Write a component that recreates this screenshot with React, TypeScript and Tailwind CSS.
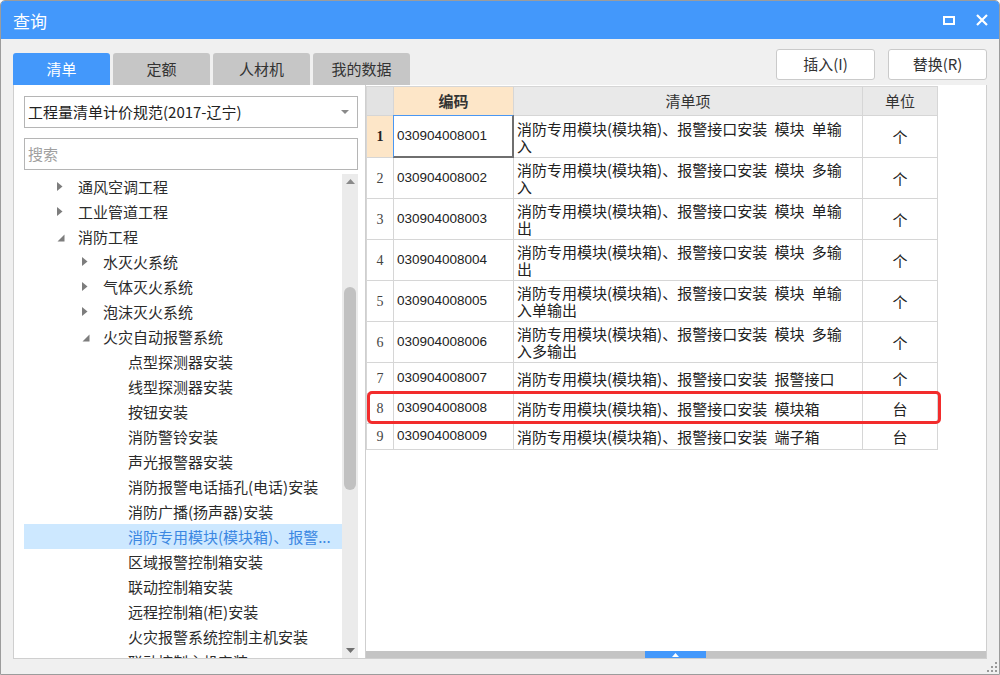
import React from "react";

type TreeNode = { label: string; level: 1 | 2 | 3; arrow?: "right" | "down"; selected?: boolean };

const tree: TreeNode[] = [
  { label: "通风空调工程", level: 1, arrow: "right" },
  { label: "工业管道工程", level: 1, arrow: "right" },
  { label: "消防工程", level: 1, arrow: "down" },
  { label: "水灭火系统", level: 2, arrow: "right" },
  { label: "气体灭火系统", level: 2, arrow: "right" },
  { label: "泡沫灭火系统", level: 2, arrow: "right" },
  { label: "火灾自动报警系统", level: 2, arrow: "down" },
  { label: "点型探测器安装", level: 3 },
  { label: "线型探测器安装", level: 3 },
  { label: "按钮安装", level: 3 },
  { label: "消防警铃安装", level: 3 },
  { label: "声光报警器安装", level: 3 },
  { label: "消防报警电话插孔(电话)安装", level: 3 },
  { label: "消防广播(扬声器)安装", level: 3 },
  { label: "消防专用模块(模块箱)、报警...", level: 3, selected: true },
  { label: "区域报警控制箱安装", level: 3 },
  { label: "联动控制箱安装", level: 3 },
  { label: "远程控制箱(柜)安装", level: 3 },
  { label: "火灾报警系统控制主机安装", level: 3 },
  { label: "联动控制主机安装", level: 3 },
];

const levelPad: Record<number, string> = { 1: "pl-[33px]", 2: "pl-[58px]", 3: "pl-[83px]" };

const P = "消防专用模块(模块箱)、报警接口安装";

type Row = { n: number; code: string; lines: string[]; unit: string; h: string };
const rows: Row[] = [
  { n: 1, code: "030904008001", lines: [P + " 模块 单输", "入"], unit: "个", h: "h-[42px]" },
  { n: 2, code: "030904008002", lines: [P + " 模块 多输", "入"], unit: "个", h: "h-[41px]" },
  { n: 3, code: "030904008003", lines: [P + " 模块 单输", "出"], unit: "个", h: "h-[41px]" },
  { n: 4, code: "030904008004", lines: [P + " 模块 多输", "出"], unit: "个", h: "h-[41px]" },
  { n: 5, code: "030904008005", lines: [P + " 模块 单输", "入单输出"], unit: "个", h: "h-[41px]" },
  { n: 6, code: "030904008006", lines: [P + " 模块 多输", "入多输出"], unit: "个", h: "h-[41px]" },
  { n: 7, code: "030904008007", lines: [P + " 报警接口"], unit: "个", h: "h-[31px]" },
  { n: 8, code: "030904008008", lines: [P + " 模块箱"], unit: "台", h: "h-[30px]" },
  { n: 9, code: "030904008009", lines: [P + " 端子箱"], unit: "台", h: "h-[26px]" },
];

function Arrow({ kind }: { kind?: "right" | "down" }) {
  return (
    <div className="w-[21px] h-full flex items-center shrink-0">
      {kind === "right" && (
        <svg width="6" height="9" viewBox="0 0 6 9">
          <polygon points="0,0 5.5,4.5 0,9" fill="#7d7d7d" />
        </svg>
      )}
      {kind === "down" && (
        <svg width="8" height="8" viewBox="0 0 8 8" className="mt-[2px]">
          <polygon points="7.5,0.5 7.5,7.5 0.5,7.5" fill="#7d7d7d" />
        </svg>
      )}
    </div>
  );
}

export default function App() {
  return (
    <div className="w-[1000px] h-[675px] flex flex-col bg-[#f0f0f0] border border-[#9c9c9c] rounded-t-[5px] overflow-hidden relative font-['Noto_Sans_CJK_SC',sans-serif] text-[#2b2b2b]">
      {/* Title bar */}
      <div className="h-[38px] bg-[#4398fb] flex items-center justify-between pl-[12px] pr-[11px] shrink-0">
        <span className="text-white text-[17px] leading-none">查询</span>
        <div className="flex items-center gap-[21px]">
          <svg width="12" height="9" viewBox="0 0 12 9">
            <rect x="1" y="1" width="10" height="7" fill="none" stroke="#fff" strokeWidth="2" />
          </svg>
          <svg width="12" height="12" viewBox="0 0 12 12">
            <path d="M1 1 L11 11 M11 1 L1 11" stroke="#fff" strokeWidth="2.2" />
          </svg>
        </div>
      </div>

      {/* Tabs + buttons */}
      <div className="h-[46px] flex justify-between items-start px-[12px] shrink-0">
        <div className="flex gap-[3px] mt-[14px]">
          <div className="w-[97px] h-[32px] rounded-t-[3px] bg-[#4398fb] text-white text-[15px] flex items-center justify-center">清单</div>
          <div className="w-[97px] h-[32px] rounded-t-[3px] bg-[#c6c6c6] text-[#333] text-[15px] flex items-center justify-center">定额</div>
          <div className="w-[97px] h-[32px] rounded-t-[3px] bg-[#c6c6c6] text-[#333] text-[15px] flex items-center justify-center">人材机</div>
          <div className="w-[97px] h-[32px] rounded-t-[3px] bg-[#c6c6c6] text-[#333] text-[15px] flex items-center justify-center">我的数据</div>
        </div>
        <div className="flex gap-[13px] mt-[10px]">
          <button className="w-[99px] h-[31px] bg-white border border-[#cacaca] rounded-[3px] text-[15px] text-[#333] flex items-center justify-center">插入(I)</button>
          <button className="w-[99px] h-[31px] bg-white border border-[#cacaca] rounded-[3px] text-[15px] text-[#333] flex items-center justify-center">替换(R)</button>
        </div>
      </div>

      {/* Panels */}
      <div className="h-[574px] flex px-[12px] shrink-0">
        {/* Left panel */}
        <div className="w-[352px] h-full bg-white border-l border-b border-[#cfcfcf] flex flex-col pl-[10px] pr-[7px] pt-[11px]">
          <div className="h-[32px] border border-[#b5b5b5] flex items-center justify-between pl-[3px] pr-[8px] shrink-0">
            <span className="text-[15px] text-[#222]">工程量清单计价规范(2017-辽宁)</span>
            <svg width="8" height="4" viewBox="0 0 8 4">
              <polygon points="0,0 8,0 4,4" fill="#8a8a8a" />
            </svg>
          </div>
          <div className="h-[32px] mt-[10px] border border-[#b5b5b5] flex items-center pl-[3px] shrink-0">
            <span className="text-[15px] text-[#a0a0a0]">搜索</span>
          </div>
          <div className="mt-[4px] flex-1 flex min-h-0">
            <div className="flex-1 overflow-hidden">
              {tree.map((t, i) => (
                <div
                  key={i}
                  className={`h-[25px] flex items-center ${levelPad[t.level]} ${t.selected ? "bg-[#cde8ff] text-[#3b87e2]" : ""}`}
                >
                  <Arrow kind={t.arrow} />
                  <span className="text-[15px] whitespace-nowrap leading-none">{t.label}</span>
                </div>
              ))}
            </div>
            <div className="w-[16px] h-full bg-[#ebebeb] flex flex-col items-center shrink-0">
              <div className="h-[14px] flex items-center justify-center">
                <svg width="9" height="5" viewBox="0 0 9 5">
                  <polygon points="0,5 9,5 4.5,0" fill="#8a8a8a" />
                </svg>
              </div>
              <div className="w-[12px] h-[203px] mt-[99px] rounded-full bg-[#c1c1c1]" />
              <div className="flex-1" />
              <div className="h-[14px] flex items-center justify-center mb-[1px]">
                <svg width="9" height="5" viewBox="0 0 9 5">
                  <polygon points="0,0 9,0 4.5,5" fill="#707070" />
                </svg>
              </div>
            </div>
          </div>
        </div>

        {/* Right panel */}
        <div className="w-[622px] h-full bg-white border-l border-r border-b border-[#cfcfcf] flex flex-col relative pt-[1px]">
          <div className="flex-1">
            <div className="w-[572px] border-l border-t border-[#d6d6d6]">
              {/* Header */}
              <div className="flex h-[29px] border-b border-[#d6d6d6]">
                <div className="w-[27px] h-full bg-[#e3e3e3] border-r border-[#d6d6d6]" />
                <div className="w-[120px] h-full bg-[#fde6c8] border-r border-[#d6d6d6] flex items-center justify-center text-[15px] font-bold text-[#333]">编码</div>
                <div className="w-[349px] h-full bg-[#e9e9e9] border-r border-[#d6d6d6] flex items-center justify-center text-[15px] text-[#333]">清单项</div>
                <div className="w-[75px] h-full bg-[#e9e9e9] border-r border-[#d6d6d6] flex items-center justify-center text-[15px] text-[#333]">单位</div>
              </div>
              {rows.map((r) => (
                <div key={r.n} className={`flex ${r.h} border-b border-[#d6d6d6]`}>
                  <div
                    className={`w-[27px] h-full border-r border-[#d6d6d6] flex items-center justify-center font-['Liberation_Serif',serif] text-[14px] ${r.n === 1 ? "bg-[#fde6c8] font-bold text-[#222]" : "text-[#444]"}`}
                  >
                    {r.n}
                  </div>
                  <div className="w-[120px] h-full border-r border-[#d6d6d6] flex items-center pl-[3px] font-['Liberation_Sans',sans-serif] text-[13.5px] text-[#222]">
                    {r.code}
                  </div>
                  <div className="w-[349px] h-full border-r border-[#d6d6d6] flex flex-col justify-center pl-[3px] text-[15px] leading-[17px] text-[#222] [word-spacing:4px]">
                    {r.lines.map((l, i) => (
                      <div key={i} className="whitespace-pre">{l}</div>
                    ))}
                  </div>
                  <div className="w-[75px] h-full border-r border-[#d6d6d6] flex items-center justify-center text-[15px] text-[#222] pt-[2px]">
                    {r.unit}
                  </div>
                </div>
              ))}
            </div>
          </div>
          {/* horizontal scrollbar */}
          <div className="h-[7px] bg-[#c4c4c4] flex shrink-0">
            <div className="ml-[279px] w-[61px] h-full bg-[#4398fb] flex items-center justify-center">
              <svg width="7" height="4" viewBox="0 0 7 4">
                <polygon points="0,4 7,4 3.5,0" fill="#fff" />
              </svg>
            </div>
          </div>

          {/* focused cell */}
          <div className="absolute left-[27px] top-[30px] w-[121px] h-[43px] border-l border-t border-[#4a97f3] border-r-2 border-b-2 border-r-[#6f6f6f] border-b-[#6f6f6f] pointer-events-none" />
          {/* red annotation */}
          <div className="absolute left-[1px] top-[306px] w-[574px] h-[33px] border-[3px] border-[#f22c2c] rounded-[5px] pointer-events-none" />
        </div>
      </div>

      {/* Bottom strip with grip */}
      <div className="flex-1 relative">
        <div className="absolute right-[2px] bottom-[2px] grid grid-cols-3 gap-[2px]">
          <div className="w-[2px] h-[2px]" />
          <div className="w-[2px] h-[2px]" />
          <div className="w-[2px] h-[2px] bg-[#999]" />
          <div className="w-[2px] h-[2px]" />
          <div className="w-[2px] h-[2px] bg-[#999]" />
          <div className="w-[2px] h-[2px] bg-[#999]" />
          <div className="w-[2px] h-[2px] bg-[#999]" />
          <div className="w-[2px] h-[2px] bg-[#999]" />
          <div className="w-[2px] h-[2px] bg-[#999]" />
        </div>
      </div>
    </div>
  );
}
